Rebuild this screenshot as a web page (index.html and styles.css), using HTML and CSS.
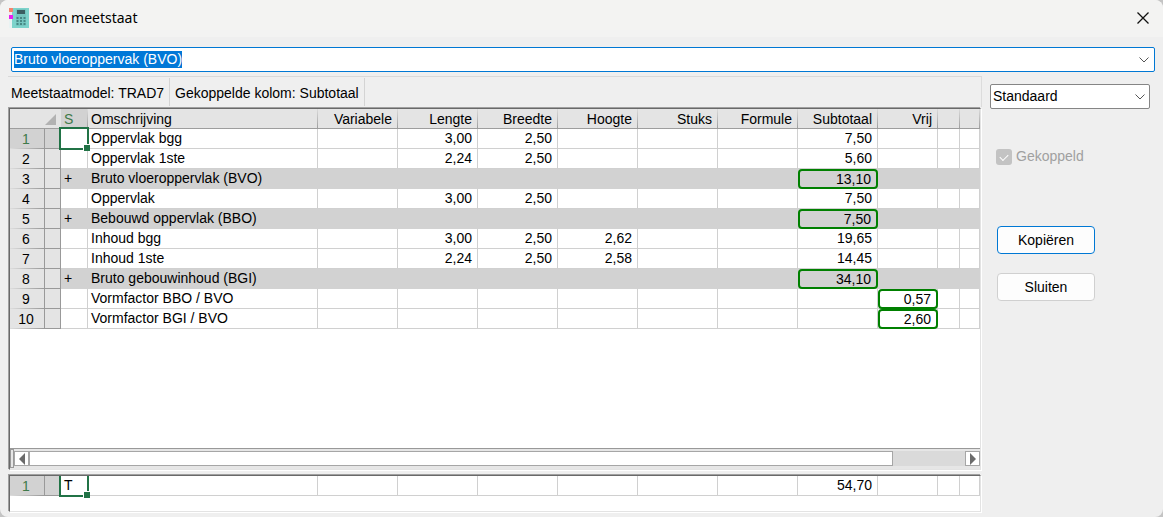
FILE: index.html
```html
<!DOCTYPE html>
<html lang="nl">
<head>
<meta charset="utf-8">
<title>Toon meetstaat</title>
<link rel="stylesheet" href="styles.css">
</head>
<body>
<div class="window">
  <header class="titlebar">
    <svg class="app-icon" width="20" height="20" viewBox="0 0 20 20" aria-hidden="true">
      <rect x="3" width="17" height="20" fill="#7dd3cb"/>
      <rect width="4" height="4" fill="#f4836c"/><rect y="4" width="3" height="3" fill="#f6e4ea"/>
      <rect y="7" width="4" height="4" fill="#e81cf0"/><rect y="11" width="3" height="9" fill="#e9f3f3"/>
      <rect x="7" y="1" width="10" height="17" rx="1" fill="#74c6bf"/>
      <rect x="8" y="2" width="8" height="4" fill="#3b5f61"/>
      <path d="M7.500 10h9M7.500 13h9M7.500 16h9" stroke="#478884" stroke-width="2" stroke-dasharray="2 1.500"/>
    </svg>
    <h1 class="title">Toon meetstaat</h1>
    <button class="close" aria-label="Sluiten"><svg width="12" height="12" viewBox="0 0 12 12"><path d="M.5.5l11 11M11.500.5l-11 11" stroke="#111" stroke-width="1.3"/></svg></button>
  </header>

  <div class="combo">
    <input class="combo-input" type="text" value="Bruto vloeroppervak (BVO)" aria-label="Meetstaat">
    <button class="combo-arrow" aria-label="Lijst openen"><svg width="10" height="6" viewBox="0 0 10 6"><path d="M.5.5L5 5 9.500.5" fill="none" stroke="#555"/></svg></button>
  </div>

  <div class="body">
    <main class="main">
      <div class="status">
        <span class="status-item">Meetstaatmodel: TRAD7</span>
        <span class="status-item">Gekoppelde kolom: Subtotaal</span>
      </div>

      <section class="grid grid-main">
        <div class="grid-view">
          <table class="sheet">
            <colgroup><col class="c-no"><col class="c-mark"><col class="c-s"><col class="c-desc"><col class="c-num" span="7"><col class="c-free"><col class="c-gap"><col></colgroup>
            <thead>
              <tr><th class="corner" colspan="2"><svg width="11" height="11" viewBox="0 0 11 11" aria-hidden="true"><path d="M11 0v11H0z" fill="#b2b2b2"/></svg></th><th class="left current">S</th><th class="left">Omschrijving</th><th>Variabele</th><th>Lengte</th><th>Breedte</th><th>Hoogte</th><th>Stuks</th><th>Formule</th><th>Subtotaal</th><th>Vrij</th><th></th><th></th></tr>
            </thead>
            <tbody>
              <tr><th class="no current">1</th><th class="mark current"></th><td class="left active"></td><td class="left">Oppervlak bgg</td><td></td><td>3,00</td><td>2,50</td><td></td><td></td><td></td><td>7,50</td><td></td><td></td><td></td></tr>
              <tr><th class="no">2</th><th class="mark"></th><td class="left"></td><td class="left">Oppervlak 1ste</td><td></td><td>2,24</td><td>2,50</td><td></td><td></td><td></td><td>5,60</td><td></td><td></td><td></td></tr>
              <tr class="total"><th class="no">3</th><th class="mark"></th><td class="left">+</td><td class="left">Bruto vloeroppervlak (BVO)</td><td></td><td></td><td></td><td></td><td></td><td></td><td class="linked">13,10</td><td></td><td></td><td></td></tr>
              <tr><th class="no">4</th><th class="mark"></th><td class="left"></td><td class="left">Oppervlak</td><td></td><td>3,00</td><td>2,50</td><td></td><td></td><td></td><td>7,50</td><td></td><td></td><td></td></tr>
              <tr class="total"><th class="no">5</th><th class="mark"></th><td class="left">+</td><td class="left">Bebouwd oppervlak (BBO)</td><td></td><td></td><td></td><td></td><td></td><td></td><td class="linked">7,50</td><td></td><td></td><td></td></tr>
              <tr><th class="no">6</th><th class="mark"></th><td class="left"></td><td class="left">Inhoud bgg</td><td></td><td>3,00</td><td>2,50</td><td>2,62</td><td></td><td></td><td>19,65</td><td></td><td></td><td></td></tr>
              <tr><th class="no">7</th><th class="mark"></th><td class="left"></td><td class="left">Inhoud 1ste</td><td></td><td>2,24</td><td>2,50</td><td>2,58</td><td></td><td></td><td>14,45</td><td></td><td></td><td></td></tr>
              <tr class="total"><th class="no">8</th><th class="mark"></th><td class="left">+</td><td class="left">Bruto gebouwinhoud (BGI)</td><td></td><td></td><td></td><td></td><td></td><td></td><td class="linked">34,10</td><td></td><td></td><td></td></tr>
              <tr><th class="no">9</th><th class="mark"></th><td class="left"></td><td class="left">Vormfactor BBO / BVO</td><td></td><td></td><td></td><td></td><td></td><td></td><td></td><td class="linked">0,57</td><td></td><td></td></tr>
              <tr><th class="no">10</th><th class="mark"></th><td class="left"></td><td class="left">Vormfactor BGI / BVO</td><td></td><td></td><td></td><td></td><td></td><td></td><td></td><td class="linked">2,60</td><td></td><td></td></tr>
            </tbody>
          </table>
        </div>
        <div class="scrollbar">
          <span class="splitter"></span>
          <button class="scroll-button" aria-label="Naar links"><svg width="6" height="12" viewBox="0 0 6 12"><path d="M6 0v12L0 6z" fill="#6b6b6b"/></svg></button>
          <div class="track"><div class="thumb"></div></div>
          <button class="scroll-button" aria-label="Naar rechts"><svg width="6" height="12" viewBox="0 0 6 12"><path d="M0 0v12l6-6z" fill="#6b6b6b"/></svg></button>
        </div>
      </section>

      <section class="grid grid-sum">
        <table class="sheet">
          <colgroup><col class="c-no"><col class="c-mark"><col class="c-s"><col class="c-desc"><col class="c-num" span="7"><col class="c-free"><col class="c-gap"><col></colgroup>
          <tbody>
            <tr><th class="no current">1</th><th class="mark current"></th><td class="left active">T</td><td class="left"></td><td></td><td></td><td></td><td></td><td></td><td></td><td>54,70</td><td></td><td></td><td></td></tr>
          </tbody>
        </table>
      </section>
    </main>

    <aside class="side">
      <div class="picker">
        <select class="picker-select" aria-label="Weergave"><option>Standaard</option></select>
        <svg class="picker-arrow" width="10" height="6" viewBox="0 0 10 6" aria-hidden="true"><path d="M.5.5L5 5 9.500.5" fill="none" stroke="#555"/></svg>
      </div>
      <label class="check"><input class="check-box" type="checkbox" checked disabled>Gekoppeld</label>
      <div class="actions">
        <button class="button primary">Kopiëren</button>
        <button class="button">Sluiten</button>
      </div>
    </aside>
  </div>
</div>
</body>
</html>
```
FILE: styles.css
```css
* { box-sizing: border-box; }

body {
  margin: 0;
  background: #c4c4c4;
  color: #000;
  font: 14px/19px "Liberation Sans", Arial, sans-serif;
}

button, input, select { font: inherit; color: inherit; }
button { padding: 0; }
svg { display: block; }

.window {
  display: flex;
  flex-direction: column;
  height: 100vh;
  min-height: 460px;
  overflow: hidden;
  background: #efefef;
  border-radius: 8px;
}

.titlebar {
  display: flex;
  align-items: center;
  gap: 6px;
  height: 37px;
  padding: 0 14px 1px 9px;
  background: #f3f3f2;
}

.title {
  flex: 1;
  margin: 0;
  font: 14px/20px "Noto Sans", "Open Sans", sans-serif;
}

.close, .combo-arrow { border: 0; background: none; }

.combo {
  display: flex;
  align-items: center;
  justify-content: space-between;
  height: 25px;
  margin: 10px 8px 4px 11px;
  padding: 0 5px 0 2px;
  border: 1px solid #0078d4;
  border-radius: 2px;
  background: #fff;
}

.combo-input {
  field-sizing: content;
  height: 17px;
  padding: 0;
  border: 0;
  outline: 0;
  background: #0078d7;
  color: #fff;
}

.body {
  display: flex;
  flex: 1;
  min-height: 0;
  padding: 0 13px 4px 8px;
  gap: 8px;
}

.main {
  display: flex;
  flex: 1;
  flex-direction: column;
  min-width: 0;
  border-top: 1px solid #d9d9d9;
}

.status {
  display: flex;
  height: 30px;
  padding: 1px 0;
  border-right: 1px solid #dcdcdc;
}

.status-item {
  padding: 0 5px;
  border-right: 1px solid #d4d4d4;
  line-height: 30px;
}

.status-item:first-child { padding-left: 3px; }

.grid {
  margin: 1px;
  border: 1px solid #696969;
  border-right-color: #e3e3e3;
  border-bottom-color: #e3e3e3;
  box-shadow: -1px -1px #a0a0a0, 1px 1px #fff;
  background: #fff;
  overflow: hidden;
}

.grid-main {
  display: flex;
  flex: 1;
  flex-direction: column;
  margin-bottom: 4px;
}

.grid-sum { height: 37px; }

.grid-view {
  flex: 1;
  min-height: 0;
  overflow: hidden;
}

.sheet {
  width: 100%;
  table-layout: fixed;
  border-collapse: separate;
  border-spacing: 0;
}

.c-no { width: 35px; }
.c-mark { width: 16px; }
.c-s { width: 27px; }
.c-desc { width: 230px; }
.c-num { width: 80px; }
.c-free { width: 60px; }
.c-gap { width: 22px; }

.sheet th, .sheet td {
  position: relative;
  height: 20px;
  padding: 0 5px 0 3px;
  border-right: 1px solid #d0d0d0;
  border-bottom: 1px solid #d0d0d0;
  font-weight: normal;
  line-height: 19px;
  text-align: right;
  white-space: nowrap;
}

.sheet .left { text-align: left; }

.sheet thead th {
  padding-top: 2px;
  border-right-color: #b4b4b4;
  border-bottom-color: #a6a6a6;
  border-image: linear-gradient(#dedede, #9c9c9c) 1;
  background: #e4e4e4;
  line-height: 17px;
}

.sheet thead .corner { border-right: 0; }
.corner svg { margin-left: auto; }

.sheet .no {
  padding: 1px 3px 0 1px;
  border-color: #999;
  background: linear-gradient(90deg, #ddd, #999) bottom / 100% 1px no-repeat, #e4e4e4;
  border-bottom: 0;
  text-align: center;
}

.sheet .mark {
  border-color: #999;
  background: #e4e4e4;
}

.sheet .current {
  background-color: #d2d2d2;
  color: #3f7a4a;
}

.sheet thead .current { background: #d2d2d2; }

.total td {
  border-color: #d2d2d2;
  background: #d2d2d2;
}

.sheet .active { z-index: 1; }

.active::before {
  content: "";
  position: absolute;
  inset: -2px;
  border: 2px solid #217346;
}

.active::after {
  content: "";
  position: absolute;
  right: -3px;
  bottom: -3px;
  width: 6px;
  height: 6px;
  border: solid #fff;
  border-width: 1px 0 0 1px;
  background: #217346;
}

.sheet .linked {
  padding: 2px 6px 0 0;
  line-height: 17px;
}

.linked::before {
  content: "";
  position: absolute;
  inset: 0 -1px -1px 0;
  border: 2px solid #008000;
  border-radius: 4px;
}

.scrollbar {
  display: flex;
  height: 21px;
  padding: 2px 0 3px;
  border-top: 1px solid #999;
  background: #e6e6e6;
}

.splitter {
  width: 4px;
  margin: -2px 0;
  border: 1px solid #999;
}

.scroll-button {
  display: grid;
  place-items: center;
  width: 15px;
  border: 1px solid #a6a6a6;
  background: #fff;
}

.track {
  flex: 1;
  background: #dadada;
}

.thumb {
  width: 92.3%;
  height: 100%;
  border: 1px solid #a6a6a6;
  background: #fff;
}

.side {
  width: 160px;
  padding-top: 8px;
}

.picker {
  display: grid;
  align-items: center;
}

.picker-select, .picker-arrow { grid-area: 1 / 1; }

.picker-select {
  appearance: none;
  height: 25px;
  padding: 0 2px;
  border: 1px solid #858585;
  border-radius: 2px;
  background: #fff;
}

.picker-arrow {
  justify-self: end;
  margin-right: 5px;
  pointer-events: none;
}

.check {
  display: flex;
  align-items: center;
  gap: 4px;
  margin: 38px 6px 0;
  color: #a0a0a0;
}

.check-box {
  appearance: none;
  width: 16px;
  height: 16px;
  margin: 0;
  border-radius: 3px;
  background: #c3c3c3;
}

.check-box::after {
  content: "";
  display: block;
  box-sizing: border-box;
  width: 8px;
  height: 5px;
  margin: 5px 4px;
  border: solid #fff;
  border-width: 0 0 1px 1px;
  transform: rotate(-45deg);
}

.actions {
  display: grid;
  gap: 19px;
  width: 98px;
  margin: 60px 0 0 7px;
}

.button {
  height: 28px;
  border: 1px solid #d0d0d0;
  border-radius: 4px;
  background: #fdfdfd;
}

.primary { border-color: #0078d4; }
```
